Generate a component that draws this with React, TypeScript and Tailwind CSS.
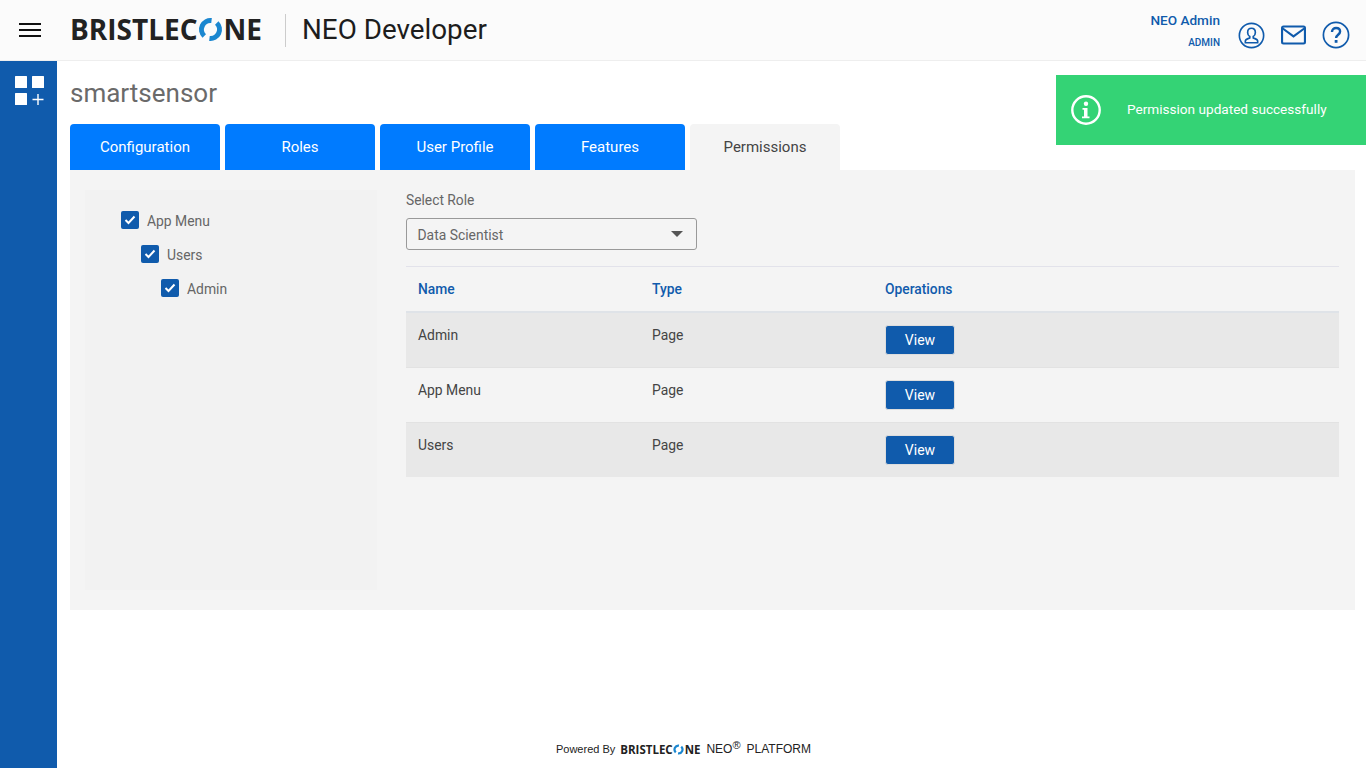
const tabs = ["Configuration", "Roles", "User Profile", "Features", "Permissions"];
const tree = [
  { label: "App Menu", indent: "ml-0" },
  { label: "Users", indent: "ml-5" },
  { label: "Admin", indent: "ml-10" },
];
const rows = [
  { name: "Admin", shaded: true },
  { name: "App Menu", shaded: false },
  { name: "Users", shaded: true },
];

function LogoO({ size }: { size: number }) {
  return (
    <svg width={size} height={size} viewBox="0 0 24 24" fill="none" className="mx-[0.5px] shrink-0">
      <path d="M13 3.460A8.6 8.6 0 0 0 6 18.200" stroke="#1b87d0" strokeWidth="4.8" />
      <path d="M18 5.800A8.6 8.6 0 0 1 11 20.540" stroke="#1b87d0" strokeWidth="4.8" />
    </svg>
  );
}

function Logo({ small }: { small?: boolean }) {
  const text = small ? "text-[11.5px] leading-none" : "-mt-[2px] text-[28px] leading-none";
  return (
    <div className={`flex items-center font-['Open_Sans',sans-serif] font-bold text-[#222222] ${text}`}>
      <span>BRISTLEC</span>
      <LogoO size={small ? 11 : 25} />
      <span>NE</span>
    </div>
  );
}

export default function App() {
  return (
    <div className="relative flex h-screen w-full flex-col overflow-hidden bg-white font-['Roboto',sans-serif]">
      {/* Header */}
      <header className="flex h-[61px] shrink-0 items-center border-b border-[#eeeeee] bg-[#fbfbfb] pl-[19px] pr-[16px]">
        <svg width="22" height="14" viewBox="0 0 22 14" className="mr-[29px]">
          <path d="M0 1h22M0 7h22M0 13h22" stroke="#111111" strokeWidth="2" />
        </svg>
        <Logo />
        <div className="ml-[23px] mr-4 h-[33px] w-px bg-[#cccccc]" />
        <span className="text-[27.800px] leading-none text-[#1d1d1d]">NEO Developer</span>
        <div className="ml-auto flex flex-col items-end text-[#105bac]">
          <span className="text-[13.6px] font-medium leading-4">NEO Admin</span>
          <span className="mt-[9px] text-[10px] font-medium leading-3">ADMIN</span>
        </div>
        <div className="ml-[18px] mt-[10px] flex items-center gap-[16px]">
          <svg width="27" height="27" viewBox="0 0 28 28" fill="none" stroke="#105bac" strokeWidth="1.7">
            <circle cx="14" cy="14" r="12.6" />
            <path d="M14 6.500c-2.600 0-4 2-4 4.300 0 2 1 3.600 2.200 4.300v1.400c-1.800.8-4.600 1.300-4.600 3.300V21.500h12.800v-1.700c0-2-2.800-2.500-4.600-3.300v-1.400c1.200-.7 2.200-2.300 2.200-4.300 0-2.300-1.400-4.300-4-4.300Z" />
          </svg>
          <svg width="25" height="20" viewBox="0 0 26 20" fill="none" stroke="#105bac" strokeWidth="2.200">
            <rect x="1.100" y="1.100" width="23.800" height="17.800" rx="1.500" />
            <path d="M1.500 3l11.500 8.500L24.500 3" />
          </svg>
          <svg width="28" height="28" viewBox="0 0 28 28" fill="none" stroke="#105bac" strokeWidth="1.7">
            <circle cx="14" cy="14" r="12.6" />
            <path d="M10 11c0-2.500 1.800-4 4.100-4 2.300 0 4 1.400 4 3.500 0 3.200-4 3.300-4 6.500" strokeWidth="2.400" />
            <path d="M14.100 19v2.800" strokeWidth="2.800" />
          </svg>
        </div>
      </header>

      <div className="flex min-h-0 flex-1">
        {/* Sidebar */}
        <aside className="flex w-[57px] shrink-0 justify-center bg-[#105bac] pt-[15px]">
          <svg width="30" height="30" viewBox="0 0 30 30" fill="white">
            <rect x="1" y="0" width="12" height="12" rx="0.5" />
            <rect x="18" y="0" width="12" height="12" rx="0.5" />
            <rect x="1" y="17" width="12" height="12" rx="0.5" />
            <path d="M24 18v11M18.500 23.500h11" stroke="white" strokeWidth="1.400" fill="none" />
          </svg>
        </aside>

        {/* Main */}
        <main className="flex min-w-0 flex-1 flex-col pl-[13px] pr-[11px]">
          <h1 className="flex h-[63px] shrink-0 items-end pb-[16px] text-[26px] font-normal leading-[30px] text-[#6a6a6a]">
            smartsensor
          </h1>

          <div className="flex gap-[5px]">
            {tabs.map((tab) => (
              <div
                key={tab}
                className={`flex h-[46px] w-[150px] items-center justify-center rounded-t-[4px] text-[15px] ${
                  tab === "Permissions" ? "bg-[#f4f4f4] text-[#444444]" : "bg-[#007bff] text-white"
                }`}
              >
                {tab}
              </div>
            ))}
          </div>

          <section className="flex h-[440px] shrink-0 bg-[#f4f4f4] pb-5 pl-[15px] pr-4 pt-5">
            {/* Tree */}
            <div className="flex w-[292px] shrink-0 flex-col gap-4 bg-[#f2f2f2] pl-9 pt-[21px]">
              {tree.map((item) => (
                <div key={item.label} className={`flex h-[18px] items-center gap-2 ${item.indent}`}>
                  <span className="flex h-[18px] w-[18px] items-center justify-center rounded-[2px] bg-[#105bac]">
                    <svg width="12" height="10" viewBox="0 0 12 10" fill="none" stroke="white" strokeWidth="2">
                      <path d="M1.500 5l3 3 6-6.500" />
                    </svg>
                  </span>
                  <span className="mt-[2px] text-[13.9px] leading-5 text-[#666666]">{item.label}</span>
                </div>
              ))}
            </div>

            {/* Role table */}
            <div className="ml-[29px] flex min-w-0 flex-1 flex-col">
              <label className="text-[13.8px] leading-5 text-[#666666]">Select Role</label>
              <div className="mt-2 flex h-8 w-[291px] items-center justify-between rounded-[3px] border border-[#999999] pl-[10.500px] pr-[13px] text-[13.9px] text-[#666666]">
                <span className="mt-[2px]">Data Scientist</span>
                <span className="h-0 w-0 border-x-[6px] border-t-[6px] border-x-transparent border-t-[#555555]" />
              </div>
              <div className="mt-4 border-t border-[#e2e2ea]" />
              <div className="flex h-[46px] items-center border-b-2 border-[#dfe3e8] pl-3 text-[13.8px] font-medium text-[#105bac]">
                <span className="w-[234px]">Name</span>
                <span className="w-[233px]">Type</span>
                <span>Operations</span>
              </div>
              {rows.map((row) => (
                <div
                  key={row.name}
                  className={`flex h-[55px] items-start border-b border-[#e2e2e2] pl-3 pt-3 text-[13.9px] leading-5 text-[#444444] last:h-[54px] last:border-b-0 ${
                    row.shaded ? "bg-[#e8e8e8]" : ""
                  }`}
                >
                  <span className="w-[234px]">{row.name}</span>
                  <span className="w-[233px]">Page</span>
                  <button className="flex h-[30px] w-[70px] items-center justify-center rounded-[3px] border border-[#dddddd] bg-[#105bac] text-[14px] text-white">
                    View
                  </button>
                </div>
              ))}
            </div>
          </section>

          {/* Footer */}
          <footer className="mt-auto flex h-[38px] items-start justify-center pr-[58px] pt-[11px] font-['Liberation_Sans',sans-serif] text-[#222222]">
            <span className="mt-[1px] text-[11px] leading-[14px]">Powered By</span>
            <span className="ml-[5px] mt-[3px]"><Logo small /></span>
            <span className="ml-[6px] text-[12px] leading-[16px]">NEO</span>
            <span className="-mt-[3px] text-[11px] leading-[14px]">®</span>
            <span className="ml-[6px] text-[12px] leading-[16px]">PLATFORM</span>
          </footer>
        </main>
      </div>

      {/* Toast */}
      <div className="absolute right-0 top-[75px] flex h-[70px] w-[310px] items-center bg-[#34d375] pl-[15px] text-white">
        <svg width="30" height="30" viewBox="0 0 30 30" fill="none">
          <circle cx="15" cy="15" r="13.700" stroke="white" strokeWidth="2.400" />
          <circle cx="15" cy="8.800" r="2.200" fill="white" />
          <path d="M11.500 13h5v8.500h2v1.800h-7.500v-1.800h2v-6.700h-1.500Z" fill="white" />
        </svg>
        <span className="-mt-px ml-[26px] text-[13.6px]">Permission updated successfully</span>
      </div>
    </div>
  );
}
